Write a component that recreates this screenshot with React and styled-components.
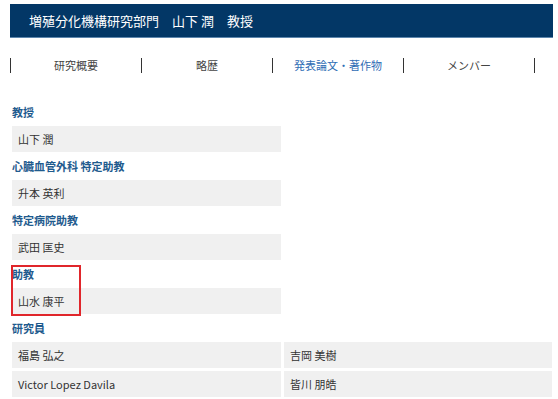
import React from "react";
import styled, { createGlobalStyle } from "styled-components";

const Global = createGlobalStyle`
  body {
    margin: 0;
    background: #fff;
    font-family: "Noto Sans CJK JP", "Noto Sans", sans-serif;
  }
`;

const Page = styled.div`
  padding: 4px 5px 0 10px;
`;

const Header = styled.h1`
  margin: 0;
  height: 33px;
  background: #033766;
  border-bottom: 1px solid #5d86ad;
  color: #fff;
  font-size: 13px;
  font-weight: normal;
  line-height: 33px;
  padding-left: 19px;
  white-space: pre;
`;

const Nav = styled.nav`
  display: flex;
  width: 524px;
  margin-top: 20px;
  border-right: 1px solid #333;
`;

const NavItem = styled.a`
  flex: 1;
  height: 15px;
  border-left: 1px solid #333;
  text-align: center;
  font-size: 11px;
  line-height: 15px;
  color: ${({ active }) => (active ? "#2f6db5" : "#444")};
`;

const Members = styled.div`
  margin-top: 25px;
  padding-left: 2px;
`;

const Section = styled.section`
  position: relative;
`;

const Label = styled.h2`
  margin: 0;
  height: 28px;
  display: flex;
  align-items: center;
  font-size: 11px;
  font-weight: bold;
  color: #1f5b8e;
`;

const Grid = styled.div`
  display: grid;
  grid-template-columns: ${({ cols }) => (cols === 2 ? "269px 268px" : "269px")};
  gap: 3px;
`;

const Cell = styled.div`
  height: 26px;
  line-height: 26px;
  padding-left: 6px;
  background: #f0f0f0;
  font-size: 11px;
  color: #333;
`;

const Highlight = styled.div`
  position: absolute;
  left: -1px;
  top: 5px;
  width: 66px;
  height: 47px;
  border: 2px solid #e0262b;
`;

const groups = [
  { title: "教授", names: ["山下 潤"] },
  { title: "心臓血管外科 特定助教", names: ["升本 英利"] },
  { title: "特定病院助教", names: ["武田 匡史"] },
  { title: "助教", names: ["山水 康平"], marked: true },
  {
    title: "研究員",
    names: ["福島 弘之", "吉岡 美樹", "Victor Lopez Davila", "皆川 朋皓"],
    cols: 2,
  },
];

const tabs = ["研究概要", "略歴", "発表論文・著作物", "メンバー"];

export default function App() {
  return (
    <Page>
      <Global />
      <Header>{"増殖分化機構研究部門　山下 潤　教授"}</Header>
      <Nav>
        {tabs.map((t, i) => (
          <NavItem key={t} active={i === 2}>
            {t}
          </NavItem>
        ))}
      </Nav>
      <Members>
        {groups.map((g) => (
          <Section key={g.title}>
            <Label>{g.title}</Label>
            <Grid cols={g.cols}>
              {g.names.map((n) => (
                <Cell key={n}>{n}</Cell>
              ))}
            </Grid>
            {g.marked && <Highlight />}
          </Section>
        ))}
      </Members>
    </Page>
  );
}
